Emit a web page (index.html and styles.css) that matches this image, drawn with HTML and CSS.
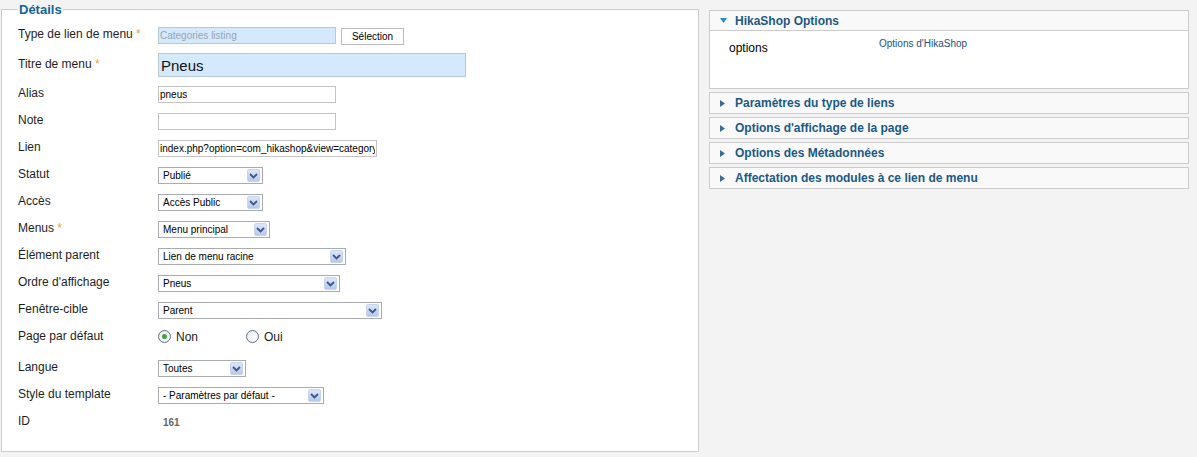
FILE: index.html
```html
<!DOCTYPE html>
<html lang="fr">
<head>
<meta charset="utf-8">
<title>Détails</title>
<link rel="stylesheet" href="styles.css">
</head>
<body>
<div class="page">
  <fieldset class="details">
    <legend>Détails</legend>

    <div class="row">
      <label class="lbl">Type de lien de menu <span class="star">*</span></label>
      <input class="inp blue muted w-type" value="Categories listing" readonly>
      <button class="btn" type="button">Sélection</button>
    </div>

    <div class="row tall">
      <label class="lbl">Titre de menu <span class="star">*</span></label>
      <input class="inp blue big" value="Pneus" readonly>
    </div>

    <div class="row">
      <label class="lbl">Alias</label>
      <input class="inp w-alias" value="pneus" readonly>
    </div>

    <div class="row">
      <label class="lbl">Note</label>
      <input class="inp w-alias" value="" readonly>
    </div>

    <div class="row">
      <label class="lbl">Lien</label>
      <input class="inp w-lien" value="index.php?option=com_hikashop&amp;view=category&amp;layout=listing" readonly>
    </div>

    <div class="row">
      <label class="lbl">Statut</label>
      <div class="sel w-statut"><span class="sel-text">Publié</span><span class="sel-btn"><svg width="9" height="6" viewBox="0 0 9 6"><path d="M1 1 L4.5 4.5 L8 1" fill="none" stroke="#3f5786" stroke-width="1.8"/></svg></span></div>
    </div>

    <div class="row">
      <label class="lbl">Accès</label>
      <div class="sel w-statut"><span class="sel-text">Accès Public</span><span class="sel-btn"><svg width="9" height="6" viewBox="0 0 9 6"><path d="M1 1 L4.5 4.5 L8 1" fill="none" stroke="#3f5786" stroke-width="1.8"/></svg></span></div>
    </div>

    <div class="row">
      <label class="lbl">Menus <span class="star">*</span></label>
      <div class="sel w-menus"><span class="sel-text">Menu principal</span><span class="sel-btn"><svg width="9" height="6" viewBox="0 0 9 6"><path d="M1 1 L4.5 4.5 L8 1" fill="none" stroke="#3f5786" stroke-width="1.8"/></svg></span></div>
    </div>

    <div class="row">
      <label class="lbl">Élément parent</label>
      <div class="sel w-parent"><span class="sel-text">Lien de menu racine</span><span class="sel-btn"><svg width="9" height="6" viewBox="0 0 9 6"><path d="M1 1 L4.5 4.5 L8 1" fill="none" stroke="#3f5786" stroke-width="1.8"/></svg></span></div>
    </div>

    <div class="row">
      <label class="lbl">Ordre d'affichage</label>
      <div class="sel w-ordre"><span class="sel-text">Pneus</span><span class="sel-btn"><svg width="9" height="6" viewBox="0 0 9 6"><path d="M1 1 L4.5 4.5 L8 1" fill="none" stroke="#3f5786" stroke-width="1.8"/></svg></span></div>
    </div>

    <div class="row">
      <label class="lbl">Fenêtre-cible</label>
      <div class="sel w-fenetre"><span class="sel-text">Parent</span><span class="sel-btn"><svg width="9" height="6" viewBox="0 0 9 6"><path d="M1 1 L4.5 4.5 L8 1" fill="none" stroke="#3f5786" stroke-width="1.8"/></svg></span></div>
    </div>

    <div class="row radios">
      <label class="lbl">Page par défaut</label>
      <span class="opt"><span class="radio on"></span><span class="rlabel">Non</span></span>
      <span class="opt"><span class="radio"></span><span class="rlabel">Oui</span></span>
    </div>

    <div class="row">
      <label class="lbl">Langue</label>
      <div class="sel w-langue"><span class="sel-text">Toutes</span><span class="sel-btn"><svg width="9" height="6" viewBox="0 0 9 6"><path d="M1 1 L4.5 4.5 L8 1" fill="none" stroke="#3f5786" stroke-width="1.8"/></svg></span></div>
    </div>

    <div class="row">
      <label class="lbl">Style du template</label>
      <div class="sel w-style"><span class="sel-text">- Paramètres par défaut -</span><span class="sel-btn"><svg width="9" height="6" viewBox="0 0 9 6"><path d="M1 1 L4.5 4.5 L8 1" fill="none" stroke="#3f5786" stroke-width="1.8"/></svg></span></div>
    </div>

    <div class="row">
      <label class="lbl">ID</label>
      <span class="idval">161</span>
    </div>
  </fieldset>

  <div class="side">
    <div class="panel">
      <div class="phead open">
        <span class="tri"><svg width="7" height="5" viewBox="0 0 7 5"><path d="M0 0 H7 L3.5 5 Z" fill="#2c87c6"/></svg></span>
        <span class="ptitle">HikaShop Options</span>
      </div>
      <div class="pbody">
        <span class="plabel">options</span>
        <span class="plink">Options d'HikaShop</span>
      </div>
    </div>
    <div class="panel">
      <div class="phead">
        <span class="tri"><svg width="5" height="7" viewBox="0 0 5 7"><path d="M0 0 L5 3.5 L0 7 Z" fill="#3b6d98"/></svg></span>
        <span class="ptitle">Paramètres du type de liens</span>
      </div>
    </div>
    <div class="panel">
      <div class="phead">
        <span class="tri"><svg width="5" height="7" viewBox="0 0 5 7"><path d="M0 0 L5 3.5 L0 7 Z" fill="#3b6d98"/></svg></span>
        <span class="ptitle">Options d'affichage de la page</span>
      </div>
    </div>
    <div class="panel">
      <div class="phead">
        <span class="tri"><svg width="5" height="7" viewBox="0 0 5 7"><path d="M0 0 L5 3.5 L0 7 Z" fill="#3b6d98"/></svg></span>
        <span class="ptitle">Options des Métadonnées</span>
      </div>
    </div>
    <div class="panel">
      <div class="phead">
        <span class="tri"><svg width="5" height="7" viewBox="0 0 5 7"><path d="M0 0 L5 3.5 L0 7 Z" fill="#3b6d98"/></svg></span>
        <span class="ptitle">Affectation des modules à ce lien de menu</span>
      </div>
    </div>
  </div>
</div>
</body>
</html>
```

FILE: styles.css
```css
html, body {
  margin: 0;
  padding: 0;
}
body {
  background: #f3f3f3;
  font-family: "Liberation Sans", Arial, sans-serif;
  font-size: 12px;
  color: #1e1e1e;
}
.page {
  display: flex;
  align-items: flex-start;
}

/* Left fieldset */
.details {
  margin: 2px 0 0 1px;
  width: 698px;
  min-width: 0;
  box-sizing: border-box;
  border: 1px solid #cccccc;
  background: #ffffff;
  padding: 5px 16px 15px 16px;
}
.details legend {
  font-size: 13px;
  line-height: 15px;
  font-weight: bold;
  color: #146295;
  padding: 0 1px;
}
.row {
  display: flex;
  align-items: center;
  height: 27px;
}
.row.tall {
  height: 32px;
}
.row.radios {
  height: 25px;
  margin-bottom: 6px;
}
.lbl {
  width: 140px;
  flex: none;
  line-height: 14px;
  padding-bottom: 3px;
}
.row.radios .lbl {
  padding-bottom: 1px;
}
.star {
  color: #eba343;
}

.inp {
  box-sizing: border-box;
  height: 17px;
  margin: 0;
  padding: 0 1px;
  border: 1px solid #c4c4c4;
  background: #ffffff;
  color: #000000;
  font-family: "Liberation Sans", Arial, sans-serif;
  font-size: 10px;
  outline: none;
}
.inp.blue {
  background: #d5e9fc;
  border-color: #b7c8d6;
}
.inp.muted {
  color: #9ba4ad;
}
.inp.big {
  width: 308px;
  height: 24px;
  font-size: 15px;
  padding: 0 2px;
  color: #111111;
}
.w-type { width: 178px; }
.w-alias { width: 178px; }
.w-lien { width: 219px; }

.btn {
  box-sizing: border-box;
  margin: 2px 0 0 5px;
  width: 63px;
  height: 17px;
  padding: 0;
  border: 1px solid #bdbdbd;
  background: #ffffff;
  color: #000000;
  font-family: "Liberation Sans", Arial, sans-serif;
  font-size: 10px;
}

/* Fake selects */
.sel {
  box-sizing: border-box;
  display: flex;
  align-items: center;
  justify-content: space-between;
  height: 17px;
  padding: 0 2px 0 4px;
  border: 1px solid #a8acb0;
  background: #ffffff;
  color: #000000;
  font-size: 10px;
}
.sel-text {
  white-space: nowrap;
  line-height: 12px;
  padding-top: 1px;
}
.sel-btn {
  box-sizing: border-box;
  width: 13px;
  height: 13px;
  display: flex;
  align-items: center;
  justify-content: center;
  border: 1px solid #c8d3ec;
  border-radius: 2px;
  background: linear-gradient(#dde6f8, #b6c8ee);
}
.w-statut { width: 105px; }
.w-menus { width: 112px; }
.w-parent { width: 188px; }
.w-ordre { width: 182px; }
.w-fenetre { width: 224px; }
.w-langue { width: 88px; }
.w-style { width: 166px; }

/* Radios */
.opt {
  display: flex;
  align-items: center;
  width: 88px;
}
.radio {
  box-sizing: border-box;
  width: 13px;
  height: 13px;
  border-radius: 50%;
  border: 1px solid #5f7183;
  background: radial-gradient(circle at 60% 60%, #ffffff, #e4e4e4);
  display: flex;
  align-items: center;
  justify-content: center;
  flex: none;
}
.radio.on::after {
  content: "";
  width: 5px;
  height: 5px;
  border-radius: 50%;
  background: #3fa43f;
}
.rlabel {
  margin-left: 5px;
  font-size: 12px;
}
.idval {
  font-weight: bold;
  font-size: 10px;
  color: #666666;
  padding-left: 5px;
  padding-bottom: 1px;
}

/* Right side panels */
.side {
  margin-left: 10px;
  width: 480px;
  padding-top: 10px;
  display: flex;
  flex-direction: column;
  gap: 3px;
}
.panel {
  border: 1px solid #cccccc;
  background: #ffffff;
}
.phead {
  display: flex;
  align-items: center;
  height: 20px;
  padding-left: 10px;
  background: #f9f9f9;
  color: #1b5886;
  font-weight: bold;
  font-size: 12px;
}
.phead.open {
  height: 19px;
  border-bottom: 1px solid #cccccc;
}
.tri {
  width: 15px;
  flex: none;
  display: flex;
  align-items: center;
}
.pbody {
  height: 57px;
  display: flex;
  align-items: flex-start;
  padding: 6px 0 0 19px;
  box-sizing: border-box;
}
.plabel {
  width: 150px;
  margin-top: 4px;
  line-height: 14px;
  color: #000000;
}
.plink {
  line-height: 14px;
  font-size: 10px;
  color: #1d4f7e;
}
```
